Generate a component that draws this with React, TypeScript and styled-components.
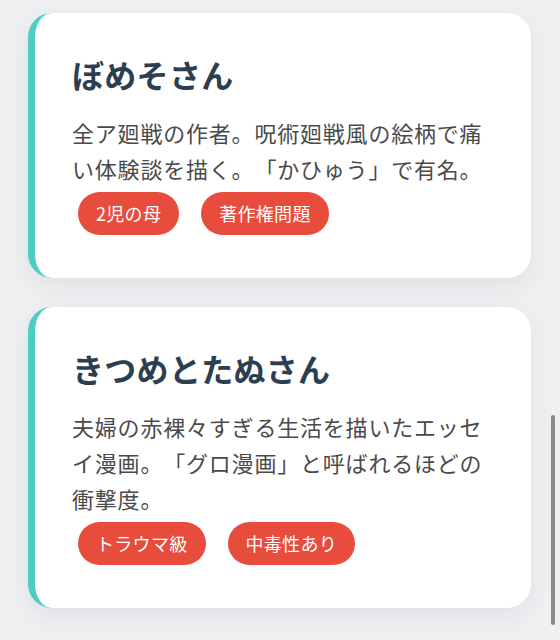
import React, { FC } from 'react';
import styled, { createGlobalStyle } from 'styled-components';

interface Person {
  name: string;
  description: string;
  tags: string[];
}

const people: Person[] = [
  {
    name: 'ぼめそさん',
    description: '全ア廻戦の作者。呪術廻戦風の絵柄で痛い体験談を描く。「かひゅう」で有名。',
    tags: ['2児の母', '著作権問題'],
  },
  {
    name: 'きつめとたぬさん',
    description: '夫婦の赤裸々すぎる生活を描いたエッセイ漫画。「グロ漫画」と呼ばれるほどの衝撃度。',
    tags: ['トラウマ級', '中毒性あり'],
  },
];

const GlobalStyle = createGlobalStyle`
  html, body {
    margin: 0;
    padding: 0;
    background: #eff0f2;
    height: 100%;
    overflow: hidden;
  }
  body {
    font-family: 'Noto Sans CJK JP', 'Noto Sans', sans-serif;
    text-spacing-trim: space-all;
  }
`;

const Page = styled.div`
  display: flex;
  flex-direction: column;
  gap: 29px;
  padding: 13px 29px 0 28px;
  height: 640px;
  box-sizing: border-box;
`;

const Card = styled.article`
  background: #ffffff;
  border-left: 7px solid #4ecdc4;
  border-radius: 24px;
  padding: 38px 38px 37px 37px;
  box-shadow: 0 8px 26px rgba(40, 50, 70, 0.08);
`;

const Title = styled.h2`
  margin: 0 0 17px;
  color: #2c3e50;
  font-size: 32px;
  font-weight: 700;
  line-height: 46px;
  letter-spacing: 0.3px;
`;

const Description = styled.p`
  margin: 0;
  color: #4a4a4a;
  font-size: 22px;
  line-height: 36px;
  letter-spacing: 0.8px;
  text-spacing-trim: space-all;
`;

const TagList = styled.div`
  display: flex;
  flex-wrap: wrap;
  gap: 10px;
`;

const Tag = styled.span`
  display: inline-block;
  margin: 6px;
  padding: 8px 18px;
  border-radius: 22px;
  background: #e74c3c;
  color: #ffffff;
  font-size: 18px;
  line-height: 27px;
  letter-spacing: 0.3px;
`;

const ScrollThumb = styled.div`
  position: fixed;
  right: 5px;
  top: 415px;
  width: 4px;
  height: 210px;
  border-radius: 2px;
  background: #8a8a8a;
`;

const PersonCard: FC<Person> = ({ name, description, tags }) => (
  <Card>
    <Title>{name}</Title>
    <Description>{description}</Description>
    <TagList>
      {tags.map((tag) => (
        <Tag key={tag}>{tag}</Tag>
      ))}
    </TagList>
  </Card>
);

const App: FC = () => (
  <>
    <GlobalStyle />
    <Page>
      {people.map((person) => (
        <PersonCard key={person.name} {...person} />
      ))}
    </Page>
    <ScrollThumb />
  </>
);

export default App;
